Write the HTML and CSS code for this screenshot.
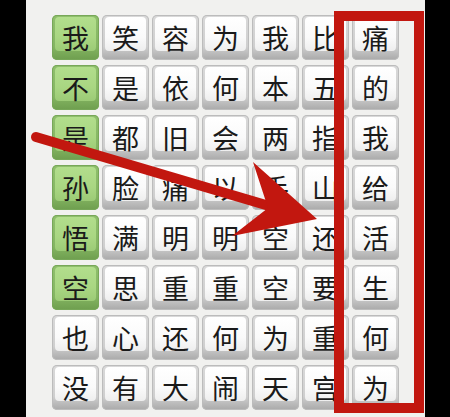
FILE: index.html
```html
<!DOCTYPE html>
<html lang="zh">
<head>
<meta charset="utf-8">
<link rel="stylesheet" href="styles.css">
</head>
<body>
<div class="screen">
  <div class="side side-left"></div>
  <div class="panel">
    <div class="grid">
      <div class="tile green"><span class="face">我</span></div>
      <div class="tile"><span class="face">笑</span></div>
      <div class="tile"><span class="face">容</span></div>
      <div class="tile"><span class="face">为</span></div>
      <div class="tile"><span class="face">我</span></div>
      <div class="tile"><span class="face">比</span></div>
      <div class="tile"><span class="face">痛</span></div>

      <div class="tile green"><span class="face">不</span></div>
      <div class="tile"><span class="face">是</span></div>
      <div class="tile"><span class="face">依</span></div>
      <div class="tile"><span class="face">何</span></div>
      <div class="tile"><span class="face">本</span></div>
      <div class="tile"><span class="face">五</span></div>
      <div class="tile"><span class="face">的</span></div>

      <div class="tile green"><span class="face">是</span></div>
      <div class="tile"><span class="face">都</span></div>
      <div class="tile"><span class="face">旧</span></div>
      <div class="tile"><span class="face">会</span></div>
      <div class="tile"><span class="face">两</span></div>
      <div class="tile"><span class="face">指</span></div>
      <div class="tile"><span class="face">我</span></div>

      <div class="tile green"><span class="face">孙</span></div>
      <div class="tile"><span class="face">脸</span></div>
      <div class="tile"><span class="face">痛</span></div>
      <div class="tile"><span class="face">以</span></div>
      <div class="tile"><span class="face">手</span></div>
      <div class="tile"><span class="face">山</span></div>
      <div class="tile"><span class="face">给</span></div>

      <div class="tile green"><span class="face">悟</span></div>
      <div class="tile"><span class="face">满</span></div>
      <div class="tile"><span class="face">明</span></div>
      <div class="tile"><span class="face">明</span></div>
      <div class="tile"><span class="face">空</span></div>
      <div class="tile"><span class="face">还</span></div>
      <div class="tile"><span class="face">活</span></div>

      <div class="tile green"><span class="face">空</span></div>
      <div class="tile"><span class="face">思</span></div>
      <div class="tile"><span class="face">重</span></div>
      <div class="tile"><span class="face">重</span></div>
      <div class="tile"><span class="face">空</span></div>
      <div class="tile"><span class="face">要</span></div>
      <div class="tile"><span class="face">生</span></div>

      <div class="tile"><span class="face">也</span></div>
      <div class="tile"><span class="face">心</span></div>
      <div class="tile"><span class="face">还</span></div>
      <div class="tile"><span class="face">何</span></div>
      <div class="tile"><span class="face">为</span></div>
      <div class="tile"><span class="face">重</span></div>
      <div class="tile"><span class="face">何</span></div>

      <div class="tile"><span class="face">没</span></div>
      <div class="tile"><span class="face">有</span></div>
      <div class="tile"><span class="face">大</span></div>
      <div class="tile"><span class="face">闹</span></div>
      <div class="tile"><span class="face">天</span></div>
      <div class="tile"><span class="face">宫</span></div>
      <div class="tile"><span class="face">为</span></div>
    </div>
  </div>
  <div class="side side-right"></div>
  <svg class="overlay" width="450" height="417" viewBox="0 0 450 417" aria-hidden="true">
    <rect x="339" y="16" width="80" height="392" fill="none" stroke="#c2170f" stroke-width="10"/>
    <line x1="36" y1="137" x2="276" y2="208" stroke="#c2170f" stroke-width="10" stroke-linecap="round"/>
    <polygon points="253,162 317,219 232,236 268,208" fill="#c2170f"/>
  </svg>
</div>
</body>
</html>
```

FILE: styles.css
```css
html, body {
  margin: 0;
  padding: 0;
  background: #000;
}

.screen {
  position: relative;
  width: 450px;
  height: 417px;
  display: flex;
  overflow: hidden;
  background: #000;
}

.side-left {
  width: 26px;
  flex: none;
}

.side-right {
  width: 25px;
  flex: none;
}

.panel {
  width: 399px;
  flex: none;
  background: #f1f1ef;
  padding: 15px 0 0 26px;
  box-sizing: border-box;
}

.grid {
  display: grid;
  grid-template-columns: repeat(7, 47px);
  grid-auto-rows: 45px;
  column-gap: 3px;
  row-gap: 5px;
}

.tile {
  box-sizing: border-box;
  border-radius: 5px;
  padding: 2px 3px 9px 3px;
  background: linear-gradient(#d9d9d9 0%, #cfcfcf 70%, #a9a9a9 100%);
  box-shadow: inset 0 0 0 1px #bcbcbc;
  display: flex;
}

.face {
  flex: 1;
  border-radius: 4px;
  background: linear-gradient(#ffffff 0%, #fafafa 60%, #eeeeee 100%);
  display: flex;
  align-items: center;
  justify-content: center;
  font-family: "Noto Sans CJK SC", "Noto Sans CJK JP", sans-serif;
  font-size: 27px;
  font-weight: 400;
  line-height: 1;
  color: #1a1a1a;
  padding-top: 6px;
  box-sizing: border-box;
}

.tile.green {
  background: linear-gradient(#8fbf6c 0%, #84b562 70%, #6e9e4e 100%);
  box-shadow: inset 0 0 0 1px #77a758;
}

.tile.green .face {
  background: linear-gradient(#b2de8c 0%, #a9d682 60%, #9ccb76 100%);
}

.overlay {
  position: absolute;
  left: 0;
  top: 0;
  pointer-events: none;
}
```
